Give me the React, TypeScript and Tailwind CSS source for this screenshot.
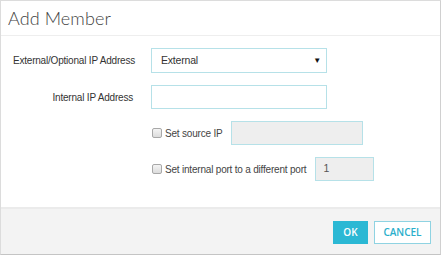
import React from 'react';

const Check: React.FC = () => (
  <span className="inline-block w-[10px] h-[10px] rounded-[2px] border border-[#a8a8a8] bg-gradient-to-b from-[#f4f4f4] to-[#dcdcdc] mr-[3px] shrink-0" />
);

const App: React.FC = () => {
  return (
    <div
      className="w-[441px] h-[255px] flex flex-col bg-white border border-[#dcdcdc] border-b-[#c4c4c4] border-r-[#d0d0d0] text-[#333]"
      style={{ fontFamily: '"Liberation Sans", Arial, sans-serif' }}
    >
      <div className="h-[35px] shrink-0 border-b border-[#eeeeee] px-[7px] flex items-center">
        <h1
          className="text-[18px] font-light text-[#444] leading-none tracking-[0.1px]"
          style={{ fontFamily: 'Lato, "Open Sans", sans-serif' }}
        >
          Add Member
        </h1>
      </div>

      <div className="flex-1 pt-[12px] flex flex-col gap-[12px] text-[10px] tracking-[-0.2px] whitespace-nowrap">
        <div className="flex items-center">
          <label className="w-[134px] text-right shrink-0 text-[#333]">External/Optional IP Address</label>
          <div className="ml-[16px] w-[176px] h-[25px] border border-[#b6e1e8] flex items-center justify-between pl-[9px] pr-[5px]">
            <span className="text-[10.5px]">External</span>
            <span className="text-[8px] text-[#111]">▼</span>
          </div>
        </div>
        <div className="flex items-center">
          <label className="w-[132px] text-right shrink-0 text-[#333]">Internal IP Address</label>
          <div className="ml-[18px] w-[176px] h-[24px] border border-[#b6e1e8]" />
        </div>
        <div className="flex items-center pl-[151px]">
          <Check />
          <span className="text-[#444]">Set source IP</span>
          <div className="ml-[9px] w-[132px] h-[24px] border border-[#b6e1e8] bg-[#eeeeee]" />
        </div>
        <div className="flex items-center pl-[151px]">
          <Check />
          <span className="text-[#444]">Set internal port to a different port</span>
          <div className="ml-[9px] w-[59px] h-[24px] border border-[#b6e1e8] bg-[#eeeeee] flex items-center px-[7px] text-[#555] text-[10.5px]">
            1
          </div>
        </div>
      </div>

      <div className="h-[47px] shrink-0 border-t-2 border-[#ebebeb] bg-[#f3f3f3] flex items-center justify-end gap-[6px] pr-[9px] pt-[1px]">
        <button
          className="w-[35px] h-[23px] bg-[#2bb8d4] text-white text-[10px] font-semibold"
          style={{ fontFamily: '"Open Sans", sans-serif' }}
        >
          OK
        </button>
        <button
          className="w-[57px] h-[23px] bg-white border border-[#8fd3e2] text-[#2aaecb] text-[10px] font-semibold"
          style={{ fontFamily: '"Open Sans", sans-serif' }}
        >
          CANCEL
        </button>
      </div>
    </div>
  );
};

export default App;
